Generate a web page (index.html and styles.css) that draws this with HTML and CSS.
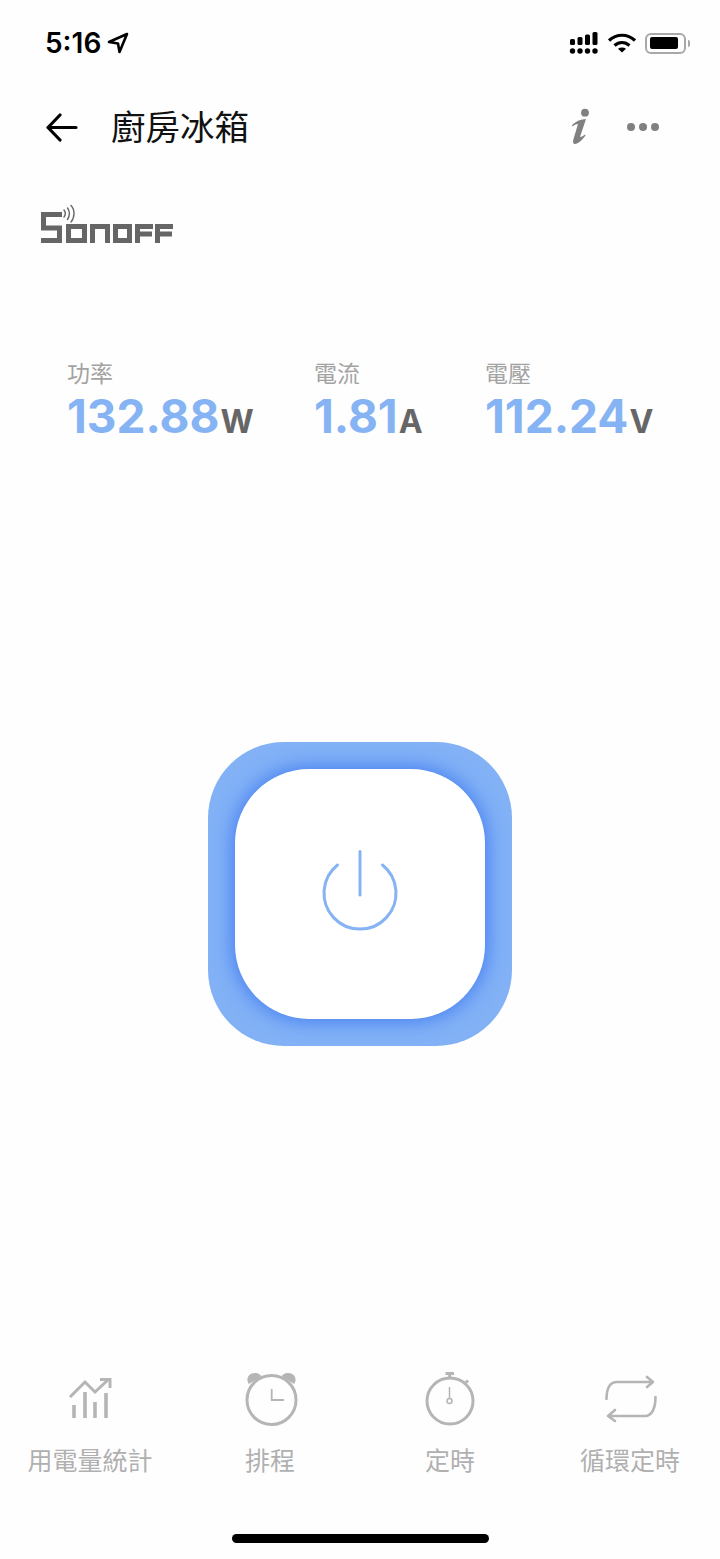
FILE: index.html
```html
<!doctype html>
<html lang="zh-TW">
    <head>
        <meta charset="UTF-8" />
        <meta name="viewport" content="width=device-width, initial-scale=1.0" />
        <title>廚房冰箱</title>
        <link rel="stylesheet" href="styles.css">
    </head>
    <body>
        <div class="phone">
            <div class="status-bar">
                <div class="status-left">
                    <span class="time">5:16</span>
                    <svg class="loc" width="22" height="22" viewBox="0 0 22 22">
                        <path d="M20 2 2 10l9 1.500L12.500 20z" fill="none" stroke="#000" stroke-width="2.600" stroke-linejoin="round" />
                    </svg>
                </div>
                <div class="status-right">
                    <svg width="32" height="24" viewBox="0 0 32 24" fill="#000">
                        <rect x="1" y="8" width="5" height="6" rx="1.500" />
                        <rect x="8.500" y="6" width="5" height="8" rx="1.500" />
                        <rect x="16" y="3.500" width="5" height="10.500" rx="1.500" />
                        <rect x="23.500" y="1" width="5" height="13" rx="1.500" />
                        <circle cx="3.500" cy="20" r="2.700" />
                        <circle cx="11" cy="20" r="2.700" />
                        <circle cx="18.500" cy="20" r="2.700" />
                        <circle cx="26" cy="20" r="2.700" />
                    </svg>
                    <svg width="30" height="22" viewBox="0 0 30 22" fill="none" stroke="#000" stroke-width="3.200">
                        <path d="M2 8.500c7.500-7 18.500-7 26 0" />
                        <path d="M7.500 13.500c4.500-4 10.500-4 15 0" />
                        <path d="M15 20.500l-4-3.700c2.400-1.600 5.600-1.600 8 0z" fill="#000" stroke="none" />
                    </svg>
                    <div class="battery"><div class="battery-level"></div></div>
                    <div class="battery-cap"></div>
                </div>
            </div>

            <div class="nav">
                <svg class="back" width="34" height="30" viewBox="0 0 34 30" fill="none" stroke="#000" stroke-width="3.200" stroke-linecap="round" stroke-linejoin="round">
                    <path d="M31 15.500H3M15 3 3 15.500 15 28" />
                </svg>
                <h1 class="title">廚房冰箱</h1>
                <svg class="info" width="20" height="40" viewBox="0 0 20 40" fill="#808080">
                    <circle cx="15" cy="4.700" r="3.900" />
                    <path d="M2 17C6 13 11 11 16 11L10 29C12 29 13 28 15 26.500L15.500 27.500C12 32 8 36 5 36C3 36 2.500 34 3.500 31L8 16C6 16 4 17 2.500 18.500Z" />
                </svg>
                <div class="more"><i></i><i></i><i></i></div>
            </div>

            <svg class="logo" width="134" height="40" viewBox="0 0 134 40" role="img" aria-label="Sonoff">
                <g fill="none" stroke="#666" stroke-width="5">
                    <path d="M22 10.500H3.500V24H19.500V36.500H1" />
                    <path d="M28.500 22.500H44.500V36.500H28.500Z" />
                    <path d="M52.500 39V22.500H67.500V39" />
                    <path d="M75.500 22.500H89.500V36.500H75.500Z" />
                    <path d="M97.500 39V22.500H113M97.500 30H112" />
                    <path d="M117.500 39V22.500H133M117.500 30H132" />
                </g>
                <g fill="none" stroke="#666" stroke-width="1.400" stroke-linecap="round">
                    <path d="M24 6c1.500 2 1.500 5 0 7M27.500 4c2.500 3 2.500 8 0 11.500M31 1.500c4 4 4 12 0 16.500" />
                </g>
            </svg>

            <div class="stats">
                <div class="stat stat-power">
                    <div class="stat-label">功率</div>
                    <div class="stat-value">132.88<span class="unit">W</span></div>
                </div>
                <div class="stat stat-current">
                    <div class="stat-label">電流</div>
                    <div class="stat-value">1.81<span class="unit">A</span></div>
                </div>
                <div class="stat">
                    <div class="stat-label">電壓</div>
                    <div class="stat-value">112.24<span class="unit">V</span></div>
                </div>
            </div>

            <div class="power-wrap">
                <div class="power-btn">
                    <div class="power-inner">
                        <svg class="power-icon" width="78" height="84" viewBox="0 0 78 84" fill="none" stroke="#85b3f3" stroke-width="3" stroke-linecap="round">
                            <path d="M39 3.500V47" />
                            <path d="M16.500 17A36 36 0 1 0 61.500 17" />
                        </svg>
                    </div>
                </div>
            </div>

            <div class="tabs">
                <div class="tab">
                    <svg class="tab-icon" width="60" height="56" viewBox="0 0 60 56" fill="none" stroke="#b5b5b5" stroke-width="3">
                        <path d="M10 27 25 12l10 10 14-13" />
                        <path d="M40 9.500H50V18" />
                        <path d="M14 35V48M25 22V48M35 32V48M46 23V48" stroke-width="3.600" />
                    </svg>
                    <span>用電量統計</span>
                </div>
                <div class="tab">
                    <svg class="tab-icon" width="60" height="56" viewBox="0 0 60 56" fill="none" stroke="#b5b5b5" stroke-width="3">
                        <circle cx="31.500" cy="30" r="24.500" />
                        <path d="M31.700 19V30H44" stroke-width="1.800" />
                        <path d="M9 14C5 9 9 2 16 3C18 3 20 4.500 21.500 6ZM54 14C58 9 54 2 47 3C45 3 43 4.500 41.500 6Z" fill="#b5b5b5" stroke="none" />
                    </svg>
                    <span>排程</span>
                </div>
                <div class="tab">
                    <svg class="tab-icon" width="60" height="56" viewBox="0 0 60 56" fill="none" stroke="#b5b5b5" stroke-width="3">
                        <circle cx="30" cy="31" r="23" />
                        <path d="M25.500 3.500H34M29.700 3V7M46 12.500l2-2" />
                        <path d="M29.500 17V28" stroke-width="1.500" />
                        <circle cx="29.500" cy="31" r="2.500" stroke-width="1.500" />
                    </svg>
                    <span>定時</span>
                </div>
                <div class="tab">
                    <svg class="tab-icon" width="60" height="56" viewBox="0 0 60 56" fill="none" stroke="#b5b5b5" stroke-width="2.600" stroke-linecap="round" stroke-linejoin="round">
                        <path d="M6.500 29C6.500 18 10 12 17 12H53M47 7 53 12 47 17" />
                        <path d="M55.500 27C55.500 38 52 46 45 46H8M15 40 8 46 15 51" />
                    </svg>
                    <span>循環定時</span>
                </div>
            </div>

            <div class="home-bar"></div>
        </div>
    </body>
</html>
```

FILE: styles.css
```css
* {
    box-sizing: border-box;
}
body {
    margin: 0;
    background-color: #fefefe;
    font-family: "Noto Sans CJK TC", "Noto Sans", sans-serif;
}
.phone {
    width: 720px;
    height: 1559px;
    display: flex;
    flex-direction: column;
    overflow: hidden;
}
.status-bar {
    height: 86px;
    padding: 0 30px 0 45px;
    display: flex;
    align-items: center;
    justify-content: space-between;
}
.status-left,
.status-right {
    display: flex;
    align-items: center;
}
.time {
    font-family: Inter, sans-serif;
    font-size: 28px;
    font-weight: 600;
    color: #000;
}
.loc {
    margin-left: 6px;
}
.status-right svg {
    margin-right: 6px;
}
.battery {
    width: 41px;
    height: 21px;
    padding: 2.500px;
    border: 2px solid #a8a8a8;
    border-radius: 6px;
    margin-left: 2px;
}
.battery-level {
    width: 28px;
    height: 100%;
    background-color: #000;
    border-radius: 2px;
}
.battery-cap {
    width: 2px;
    height: 7px;
    margin-left: 2px;
    background-color: #a8a8a8;
    border-radius: 0 2px 2px 0;
}
.nav {
    height: 82px;
    padding: 0 61px 0 45px;
    display: flex;
    align-items: center;
}
.back {
    flex: none;
}
.title {
    flex: 1;
    margin: 0 0 4px 32px;
    font-size: 34.500px;
    font-weight: 400;
    color: #111;
}
.info {
    flex: none;
    margin: 2px 37px 0 0;
}
.more {
    display: flex;
    gap: 4px;
}
.more i {
    width: 8px;
    height: 8px;
    background-color: #808080;
    border-radius: 50%;
}
.logo {
    display: block;
    flex: none;
    margin: 36px 0 0 40px;
}
.stats {
    display: flex;
    margin: 113px 0 0 67px;
}
.stat {
    flex: none;
}
.stat-power {
    width: 247px;
}
.stat-current {
    width: 171px;
}
.stat-label {
    font-size: 23px;
    line-height: 30px;
    color: #a3a3a3;
}
.stat-value {
    margin-top: 2px;
    font-family: Inter, sans-serif;
    font-size: 46px;
    line-height: 54px;
    font-weight: 700;
    color: #85b3f3;
}
.unit {
    font-size: 32px;
    color: #666;
    margin-left: 1px;
}
.power-wrap {
    flex: 1;
    display: flex;
    justify-content: center;
    padding-top: 293px;
}
.power-btn {
    width: 304px;
    height: 304px;
    padding: 27px;
    background-color: #82b1f6;
    border-radius: 76px;
}
.power-inner {
    width: 250px;
    height: 250px;
    display: flex;
    align-items: center;
    justify-content: center;
    background-color: #fff;
    border-radius: 74px;
    box-shadow: 0 0 20px 1px #3d78f0;
}
.power-icon {
    margin-bottom: 8px;
}
.tabs {
    height: 108px;
    flex: none;
    display: flex;
}
.tab {
    width: 180px;
    display: flex;
    flex-direction: column;
    align-items: center;
    font-size: 25px;
    line-height: 36px;
    color: #b0b0b0;
}
.tab-icon {
    margin-bottom: 15px;
}
.home-bar {
    width: 257px;
    height: 9px;
    margin: 56px auto 16px;
    background-color: #000;
    border-radius: 5px;
    flex: none;
}
```
